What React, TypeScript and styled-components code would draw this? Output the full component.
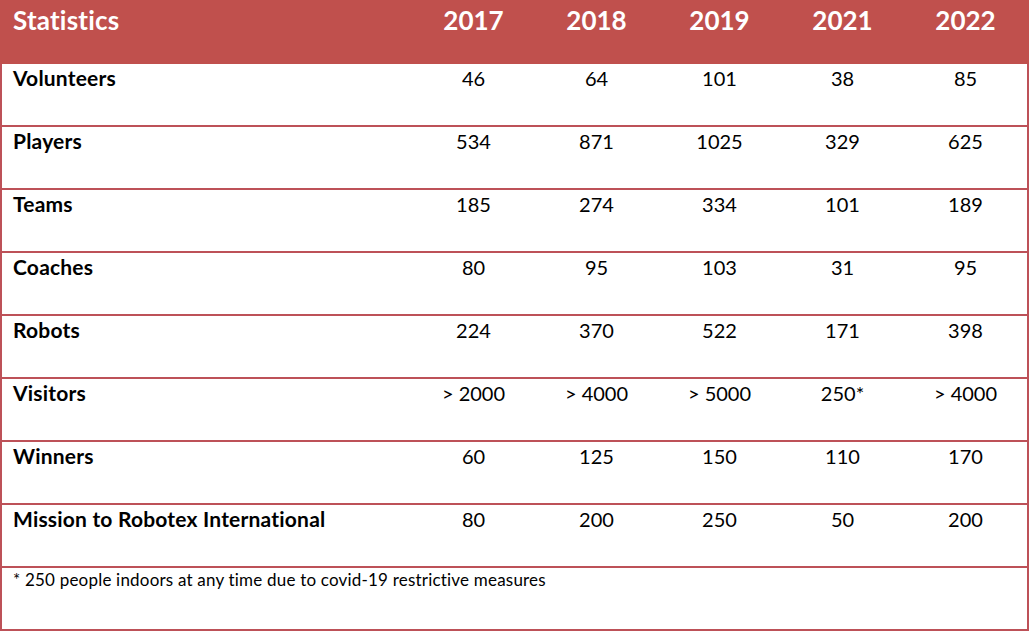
import styled, { createGlobalStyle } from 'styled-components';

const GlobalStyle = createGlobalStyle`
  html, body {
    margin: 0;
    padding: 0;
    background: #ffffff;
  }
  body {
    font-family: Lato, 'Open Sans', sans-serif;
    font-variant-ligatures: none;
    color: #000;
  }
`;

const RED = '#c0504d';
const LINE = '#bd5158';
const COLUMNS = '410px repeat(5, 123px)';

const Sheet = styled.div`
  width: 1029px;
  display: flex;
  flex-direction: column;
`;

const HeaderRow = styled.div`
  display: grid;
  grid-template-columns: ${COLUMNS};
  height: 64px;
  box-sizing: border-box;
  padding: 0 2px;
  background: ${RED};
  color: #ffffff;
  font-size: 26px;
  font-weight: 700;
  line-height: 1.2;
`;

const HeadCell = styled.div<{ $label?: boolean }>`
  padding: 5px ${(p) => (p.$label ? '11px' : '0')} 0;
  text-align: ${(p) => (p.$label ? 'left' : 'center')};
  letter-spacing: ${(p) => (p.$label ? '0.2px' : '0')};
`;

const Row = styled.div`
  display: grid;
  grid-template-columns: ${COLUMNS};
  height: 63px;
  box-sizing: border-box;
  border-left: 2px solid ${LINE};
  border-right: 2px solid ${LINE};
  border-bottom: 2px solid ${LINE};
  font-size: 20px;
  line-height: 24px;
`;

const Label = styled.div`
  padding: 2px 11px 0;
  font-size: 21px;
  letter-spacing: 0.2px;
  font-weight: 700;
`;

const Value = styled.div`
  padding-top: 2px;
  text-align: center;
`;

const NoteRow = styled.div`
  height: 63px;
  box-sizing: border-box;
  border-left: 2px solid ${LINE};
  border-right: 2px solid ${LINE};
  border-bottom: 2px solid ${LINE};
  padding: 2px 11px 0;
  font-size: 17px;
  letter-spacing: 0.2px;
  line-height: 20px;
`;

const years = ['2017', '2018', '2019', '2021', '2022'];

const rows: [string, string[]][] = [
  ['Volunteers', ['46', '64', '101', '38', '85']],
  ['Players', ['534', '871', '1025', '329', '625']],
  ['Teams', ['185', '274', '334', '101', '189']],
  ['Coaches', ['80', '95', '103', '31', '95']],
  ['Robots', ['224', '370', '522', '171', '398']],
  ['Visitors', ['> 2000', '> 4000', '> 5000', '250*', '> 4000']],
  ['Winners', ['60', '125', '150', '110', '170']],
  ['Mission to Robotex International', ['80', '200', '250', '50', '200']],
];

export default function App() {
  return (
    <>
      <GlobalStyle />
      <Sheet>
        <HeaderRow>
          <HeadCell $label>Statistics</HeadCell>
          {years.map((y) => (
            <HeadCell key={y}>{y}</HeadCell>
          ))}
        </HeaderRow>
        {rows.map(([name, values]) => (
          <Row key={name}>
            <Label>{name}</Label>
            {values.map((v, i) => (
              <Value key={i}>{v}</Value>
            ))}
          </Row>
        ))}
        <NoteRow>* 250 people indoors at any time due to covid-19 restrictive measures</NoteRow>
      </Sheet>
    </>
  );
}
